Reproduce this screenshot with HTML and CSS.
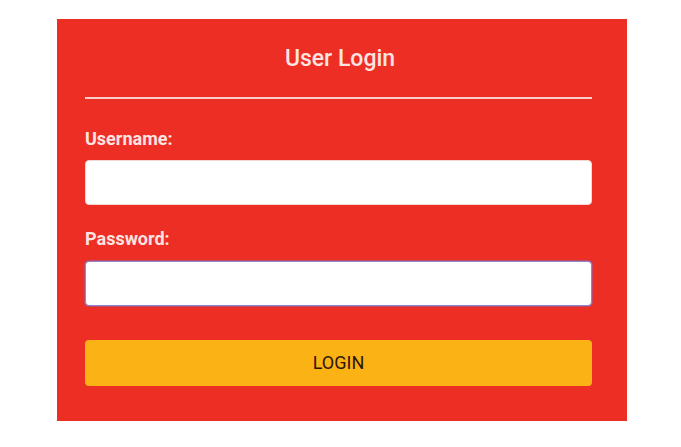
FILE: index.html
```html
<!DOCTYPE html>
<html lang="en">
<head>
<meta charset="utf-8">
<title>User Login</title>
<link rel="stylesheet" href="styles.css">
</head>
<body>
<div class="page">
  <form class="card">
    <h1 class="title">User Login</h1>
    <div class="divider"></div>
    <label class="label label-first" for="user">Username:</label>
    <input class="field" id="user" type="text">
    <label class="label" for="pass">Password:</label>
    <input class="field field-focus" id="pass" type="password">
    <button class="btn" type="button">LOGIN</button>
  </form>
</div>
</body>
</html>
```
FILE: styles.css
```css
html, body {
  margin: 0;
  background: #ffffff;
}
.page {
  padding: 19px 0 0 57px;
}
.card {
  box-sizing: border-box;
  width: 570px;
  height: 402px;
  background: #ec2e25;
  padding: 26px 35px 0 28px;
  display: flex;
  flex-direction: column;
  font-family: Roboto, "Liberation Sans", sans-serif;
}
.title {
  margin: 0;
  font-size: 23px;
  line-height: 28px;
  font-weight: 500;
  color: #fde4e0;
  text-align: center;
  padding-left: 3px;
}
.divider {
  margin-top: 24px;
  height: 2px;
  background: #f9cfca;
}
.label {
  display: block;
  margin-top: 24px;
  font-size: 18px;
  line-height: 20px;
  font-weight: 700;
  color: #fde4e0;
}
.label-first {
  margin-top: 30px;
}
.field {
  box-sizing: border-box;
  margin-top: 11px;
  height: 45px;
  width: 100%;
  border: 1px solid #f4d6d3;
  border-radius: 4px;
  background: #ffffff;
  outline: none;
  font-family: inherit;
  font-size: 15px;
  padding: 0 10px;
}
.field-focus {
  margin-top: 12px;
  border-color: #8f86c9;
  box-shadow: 0 0 1px 1px rgba(120, 110, 200, 0.45);
}
.btn {
  box-sizing: border-box;
  margin-top: 34px;
  height: 46px;
  width: 100%;
  border: none;
  border-radius: 4px;
  background: #fbb215;
  color: #2d1606;
  font-family: inherit;
  font-size: 18px;
  font-weight: 400;
  padding-bottom: 3px;
}
```
